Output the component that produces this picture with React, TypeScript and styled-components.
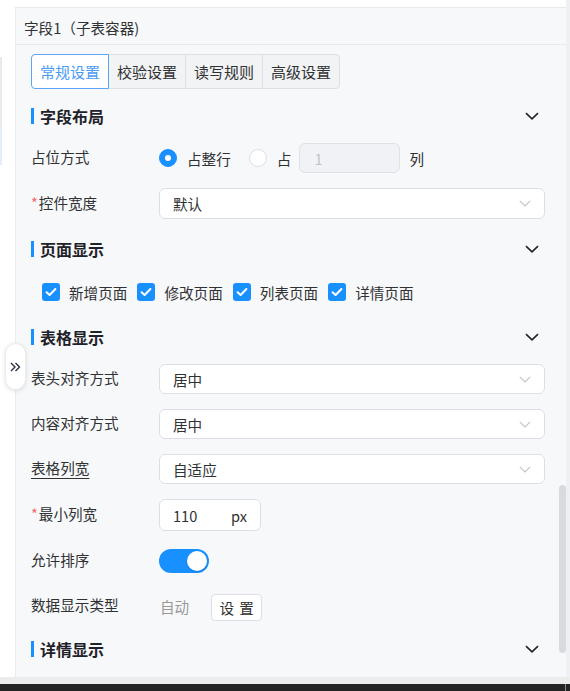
import React from "react";
import styled, { createGlobalStyle } from "styled-components";

const GlobalStyle = createGlobalStyle`
  html, body { margin: 0; padding: 0; background: #ffffff; }
  * { box-sizing: border-box; }
  body {
    font-family: "Noto Sans CJK SC", "Microsoft YaHei", "Noto Sans", sans-serif;
    color: #303133;
  }
`;

const BLUE = "#1890ff";
const FS = "14.6px";

const Screen = styled.div`
  width: 570px;
  height: 691px;
  display: flex;
  flex-direction: column;
  overflow: hidden;
  position: relative;
`;

const Workspace = styled.div`
  height: 677px;
  display: flex;
`;

const LeftRail = styled.div`
  width: 15px;
  background: #ffffff;
  display: flex;
  flex-direction: column;
  padding-top: 57px;
`;

const RailStub = styled.div<{ $h: number; $tone: string }>`
  width: 2px;
  height: ${(p) => p.$h}px;
  background: ${(p) => p.$tone};
`;

const MainColumn = styled.div`
  flex: 1;
  display: flex;
  flex-direction: column;
  min-width: 0;
`;

const TopStrip = styled.div`
  height: 8px;
  background: #ffffff;
  border-bottom: 1px solid #e8e9ec;
`;

const Panel = styled.div`
  flex: 1;
  position: relative;
  background: #f7f8fa;
  border-left: 1px solid #ebecef;
  padding: 0 21px 0 15px;
`;

const RightGutter = styled.div`
  width: 4px;
  background: #eff0f3;
`;

const PanelHeader = styled.div`
  height: 37px;
  margin: 0 -21px 0 -15px;
  padding: 3px 0 0 8px;
  display: flex;
  align-items: center;
  font-size: ${FS};
  color: #303133;
  border-bottom: 1px solid #e8e9ec;
`;

const Tabs = styled.div`
  margin-top: 9px;
  display: flex;
`;

const Tab = styled.div<{ $active?: boolean }>`
  height: 35px;
  width: 78px;
  display: flex;
  align-items: center;
  justify-content: center;
  font-size: 15px;
  color: ${(p) => (p.$active ? "#4a9bf5" : "#303133")};
  background: ${(p) => (p.$active ? "#ffffff" : "#f2f3f5")};
  border: 1px solid ${(p) => (p.$active ? "#5da5f7" : "#dcdfe6")};
  margin-left: -1px;
  position: relative;
  z-index: ${(p) => (p.$active ? 1 : 0)};
  &:first-child {
    margin-left: 0;
    border-radius: 4px 0 0 4px;
  }
  &:last-child {
    border-radius: 0 4px 4px 0;
  }
`;

const Section = styled.section<{ $top: number }>`
  margin-top: ${(p) => p.$top}px;
`;

const SectionHeader = styled.div`
  height: 30px;
  display: flex;
  align-items: center;
  justify-content: space-between;
`;

const SectionTitle = styled.div`
  display: flex;
  align-items: center;
  font-size: 16px;
  font-weight: 700;
  color: #1f2329;
  &::before {
    content: "";
    width: 3px;
    height: 16px;
    background: ${BLUE};
    margin-right: 6px;
  }
`;

const CollapseIcon = styled.svg`
  width: 14px;
  height: 8px;
  margin-right: 6px;
`;

const SectionBody = styled.div<{ $pad: number }>`
  padding-top: ${(p) => p.$pad}px;
  display: flex;
  flex-direction: column;
  gap: 15px;
`;

const FormRow = styled.div<{ $h?: number }>`
  height: ${(p) => p.$h ?? 30}px;
  display: flex;
  align-items: center;
`;

const Label = styled.div<{ $underline?: boolean }>`
  width: 128px;
  flex: none;
  font-size: ${FS};
  color: #303133;
  margin-top: -3px;
  text-decoration: ${(p) => (p.$underline ? "underline" : "none")};
  text-underline-offset: 4px;
`;

const Required = styled.span`
  color: #f56c6c;
  margin-right: 1px;
`;

const RadioGroup = styled.div`
  display: flex;
  align-items: center;
  font-size: ${FS};
`;

const RadioDot = styled.span<{ $checked?: boolean }>`
  width: 18px;
  height: 18px;
  border-radius: 50%;
  flex: none;
  background: ${(p) => (p.$checked ? BLUE : "#ffffff")};
  border: 1px solid ${(p) => (p.$checked ? BLUE : "#dcdfe6")};
  display: flex;
  align-items: center;
  justify-content: center;
  margin-right: 10px;
  &::after {
    content: "";
    width: 6px;
    height: 6px;
    border-radius: 50%;
    background: #ffffff;
    display: ${(p) => (p.$checked ? "block" : "none")};
  }
`;

const RadioText = styled.span<{ $gap: number }>`
  margin-right: ${(p) => p.$gap}px;
`;

const SpanInput = styled.div`
  width: 101px;
  height: 30px;
  border: 1px solid #dfe1e6;
  border-radius: 6px;
  background: #f0f2f5;
  color: #c0c4cc;
  font-size: ${FS};
  display: flex;
  align-items: center;
  padding-left: 14px;
  margin-right: 9px;
`;

const Select = styled.div<{ $h?: number }>`
  flex: 1;
  height: ${(p) => p.$h ?? 30}px;
  background: #ffffff;
  border: 1px solid #dcdfe6;
  border-radius: 6px;
  display: flex;
  align-items: center;
  justify-content: space-between;
  padding: 0 13px 0 13px;
  font-size: ${FS};
  color: #303133;
`;

const SelectArrow = styled.svg`
  width: 12px;
  height: 7px;
`;

const CheckGroup = styled.div`
  display: flex;
  align-items: center;
  padding-left: 11px;
  font-size: ${FS};
`;

const CheckItem = styled.label`
  display: flex;
  align-items: center;
  margin-right: 10px;
`;

const CheckBox = styled.span`
  width: 18px;
  height: 18px;
  border-radius: 3px;
  background: ${BLUE};
  display: flex;
  align-items: center;
  justify-content: center;
  margin-right: 9px;
`;

const NumberInput = styled.div`
  width: 102px;
  height: 32px;
  background: #ffffff;
  border: 1px solid #dcdfe6;
  border-radius: 6px;
  display: flex;
  align-items: center;
  justify-content: space-between;
  padding: 0 13px 0 13px;
  font-size: ${FS};
  color: #303133;
`;

const Switch = styled.div<{ $on?: boolean }>`
  width: 50px;
  height: 24px;
  border-radius: 12px;
  background: ${(p) => (p.$on ? BLUE : "#dcdfe6")};
  display: flex;
  align-items: center;
  justify-content: ${(p) => (p.$on ? "flex-end" : "flex-start")};
  padding: 0 2px;
  &::after {
    content: "";
    width: 20px;
    height: 20px;
    border-radius: 50%;
    background: #ffffff;
    box-shadow: 0 1px 2px rgba(0, 0, 0, 0.15);
  }
`;

const MutedText = styled.span`
  font-size: ${FS};
  color: #999999;
  margin: 0 22px 0 1px;
`;

const SmallButton = styled.div`
  width: 51px;
  height: 27px;
  border: 1px solid #dcdfe6;
  border-radius: 4px;
  background: #ffffff;
  font-size: ${FS};
  word-spacing: 2px;
  color: #303133;
  display: flex;
  align-items: center;
  justify-content: center;
  margin-top: 2px;
`;

const ScrollThumb = styled.div`
  position: absolute;
  right: 0;
  top: 477px;
  width: 7px;
  height: 168px;
  border-radius: 4px;
  background: #d8dae0;
`;

const ExpandHandle = styled.div`
  position: absolute;
  left: 5px;
  top: 343px;
  width: 21px;
  height: 47px;
  border-radius: 11px;
  background: #ffffff;
  border: 1px solid #ececec;
  box-shadow: 0 1px 4px rgba(0, 0, 0, 0.12);
  display: flex;
  align-items: center;
  justify-content: center;
`;

const BottomStrip = styled.div`
  height: 7px;
  background: #ececec;
`;

const StatusBar = styled.div`
  height: 7px;
  background: #232323;
  display: flex;
  justify-content: flex-end;
  padding-right: 4px;
  &::after {
    content: "";
    width: 1px;
    background: #8a8a8a;
  }
`;

const Chevron = () => (
  <CollapseIcon viewBox="0 0 14 8">
    <path d="M1 1.2 L7 6.8 L13 1.2" fill="none" stroke="#1f2329" strokeWidth="1.6" />
  </CollapseIcon>
);

const Arrow = () => (
  <SelectArrow viewBox="0 0 12 7">
    <path d="M0.8 0.8 L6 6 L11.2 0.8" fill="none" stroke="#c0c4cc" strokeWidth="1.1" />
  </SelectArrow>
);

const Tick = () => (
  <svg width="12" height="10" viewBox="0 0 12 10">
    <path d="M1.6 5.2 L4.6 8 L10.4 2" fill="none" stroke="#ffffff" strokeWidth="2" strokeLinecap="round" strokeLinejoin="round" />
  </svg>
);

const SectionBlock: React.FC<{ title: string; top: number; pad?: number; children?: React.ReactNode }> = ({
  title,
  top,
  pad = 12,
  children,
}) => (
  <Section $top={top}>
    <SectionHeader>
      <SectionTitle>{title}</SectionTitle>
      <Chevron />
    </SectionHeader>
    {children && <SectionBody $pad={pad}>{children}</SectionBody>}
  </Section>
);

const pages = ["新增页面", "修改页面", "列表页面", "详情页面"];

export default function App() {
  return (
    <Screen>
      <GlobalStyle />
      <Workspace>
        <LeftRail>
          <RailStub $h={72} $tone="#e9eaed" />
          <RailStub $h={36} $tone="#e3eefc" />
        </LeftRail>
        <MainColumn>
          <TopStrip />
          <Panel>
            <PanelHeader>字段1（子表容器)</PanelHeader>
            <Tabs>
              <Tab $active>常规设置</Tab>
              <Tab>校验设置</Tab>
              <Tab>读写规则</Tab>
              <Tab>高级设置</Tab>
            </Tabs>

            <SectionBlock title="字段布局" top={12}>
              <FormRow>
                <Label>占位方式</Label>
                <RadioGroup>
                  <RadioDot $checked />
                  <RadioText $gap={18}>占整行</RadioText>
                  <RadioDot />
                  <RadioText $gap={8}>占</RadioText>
                  <SpanInput>1</SpanInput>
                  <span>列</span>
                </RadioGroup>
              </FormRow>
              <FormRow $h={31}>
                <Label>
                  <Required>*</Required>控件宽度
                </Label>
                <Select $h={31}>
                  默认
                  <Arrow />
                </Select>
              </FormRow>
            </SectionBlock>

            <SectionBlock title="页面显示" top={15} pad={13}>
              <FormRow>
                <CheckGroup>
                  {pages.map((p) => (
                    <CheckItem key={p}>
                      <CheckBox>
                        <Tick />
                      </CheckBox>
                      {p}
                    </CheckItem>
                  ))}
                </CheckGroup>
              </FormRow>
            </SectionBlock>

            <SectionBlock title="表格显示" top={15}>
              <FormRow>
                <Label>表头对齐方式</Label>
                <Select>
                  居中
                  <Arrow />
                </Select>
              </FormRow>
              <FormRow>
                <Label>内容对齐方式</Label>
                <Select>
                  居中
                  <Arrow />
                </Select>
              </FormRow>
              <FormRow>
                <Label $underline>表格列宽</Label>
                <Select>
                  自适应
                  <Arrow />
                </Select>
              </FormRow>
              <FormRow $h={32}>
                <Label>
                  <Required>*</Required>最小列宽
                </Label>
                <NumberInput>
                  <span>110</span>
                  <span>px</span>
                </NumberInput>
              </FormRow>
              <FormRow>
                <Label>允许排序</Label>
                <Switch $on />
              </FormRow>
              <FormRow>
                <Label>数据显示类型</Label>
                <MutedText>自动</MutedText>
                <SmallButton>设 置</SmallButton>
              </FormRow>
            </SectionBlock>

            <SectionBlock title="详情显示" top={13} />

            <ScrollThumb />
          </Panel>
        </MainColumn>
        <RightGutter />
      </Workspace>
      <BottomStrip />
      <StatusBar />

      <ExpandHandle>
        <svg width="11" height="10" viewBox="0 0 11 10">
          <path d="M1 1 L5 5 L1 9 M5.5 1 L9.5 5 L5.5 9" fill="none" stroke="#2b3245" strokeWidth="1.4" />
        </svg>
      </ExpandHandle>
    </Screen>
  );
}
